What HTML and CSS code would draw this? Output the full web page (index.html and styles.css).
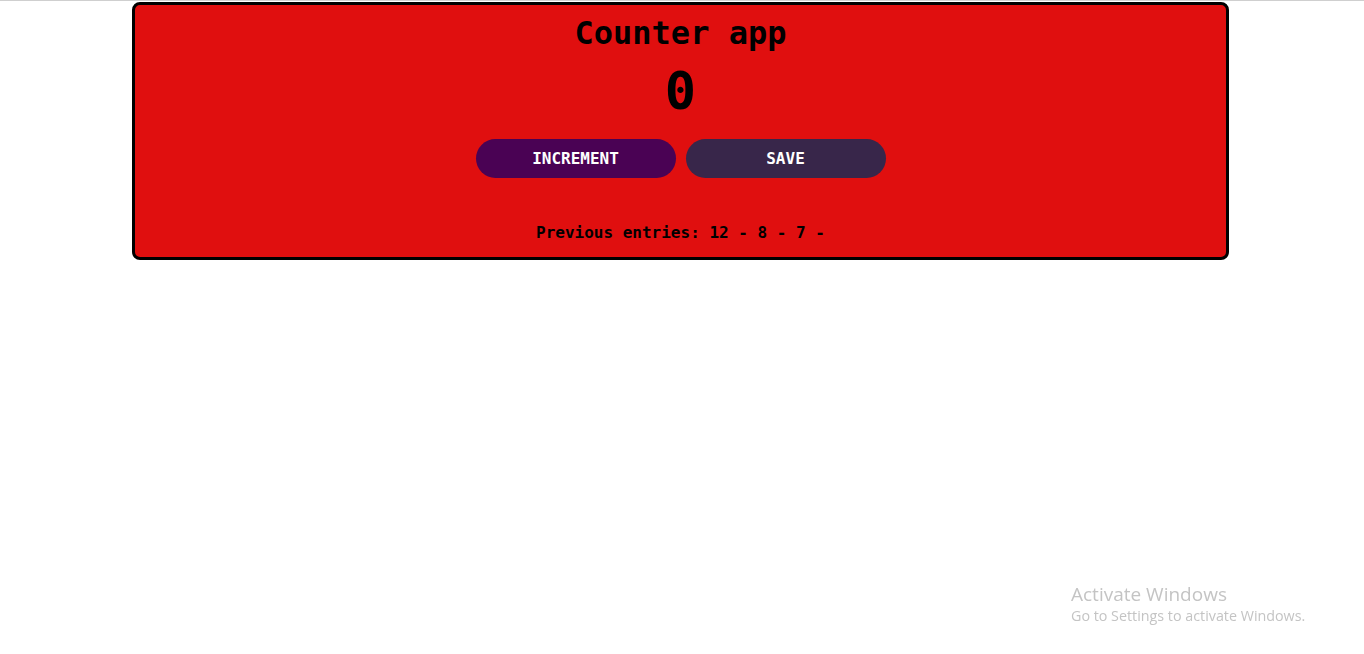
FILE: index.html
```html
<!DOCTYPE html>
<html>
<head>
<meta charset="utf-8">
<link rel="stylesheet" href="styles.css">
</head>
<body>
<div class="topline"></div>
<main class="card">
  <h1 class="title">Counter app</h1>
  <div class="count">0</div>
  <div class="actions">
    <button class="btn btn-inc">INCREMENT</button>
    <button class="btn btn-save">SAVE</button>
  </div>
  <p class="entries">Previous entries: 12 - 8 - 7 - </p>
</main>
<div class="watermark">
  <div class="wm-title">Activate Windows</div>
  <div class="wm-sub">Go to Settings to activate Windows.</div>
</div>
</body>
</html>
```

FILE: styles.css
```css
html, body {
  margin: 0;
  padding: 0;
  background: #ffffff;
}
body {
  font-family: "DejaVu Sans Mono", "Liberation Mono", monospace;
  color: #000;
}
.topline {
  height: 1px;
  background: #cfcfcf;
}
.card {
  width: 1091px;
  margin: 1px 0 0 132px;
  background: #e00f0f;
  border: 3px solid #000;
  border-radius: 8px;
  display: flex;
  flex-direction: column;
  align-items: center;
  padding: 10px 0 15px;
}
.title {
  margin: 0;
  font-size: 32px;
  font-weight: bold;
  line-height: 37px;
}
.count {
  margin-top: 9px;
  font-size: 52px;
  font-weight: bold;
  line-height: 61px;
}
.actions {
  display: flex;
  gap: 10px;
  margin-top: 17px;
}
.btn {
  width: 200px;
  height: 39px;
  border: none;
  border-radius: 20px;
  color: #fff;
  font-family: "DejaVu Sans Mono", monospace;
  font-weight: bold;
  font-size: 16px;
  padding: 0;
  cursor: pointer;
}
.btn-inc { background: #4a0254; }
.btn-save { background: #38264a; }
.entries {
  margin: 45px 0 0;
  font-size: 16px;
  font-weight: bold;
  line-height: 19px;
}
.watermark {
  position: fixed;
  left: 1071px;
  top: 582px;
  font-family: "Segoe UI", "Open Sans", "Noto Sans", sans-serif;
  color: #c4c4c4;
}
.wm-title {
  font-size: 19px;
  line-height: 24px;
}
.wm-sub {
  font-size: 14.3px;
  line-height: 20px;
}
```
